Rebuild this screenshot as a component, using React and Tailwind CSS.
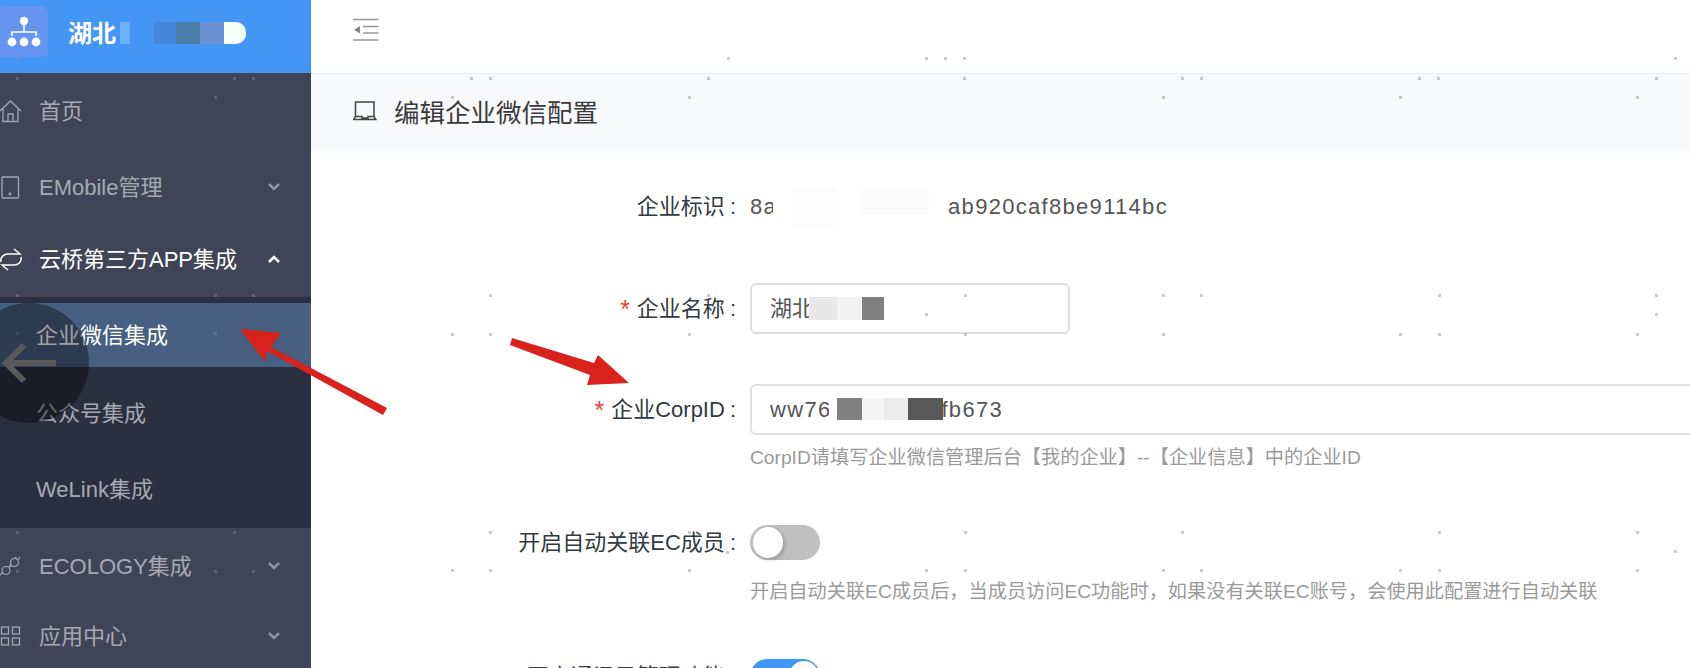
import React from "react";

const dots = [
  [17,58],[17,78],[234,78],[253,78],[215,97],[17,295],[215,295],[253,295],[17,333],[215,333],[17,532],[234,532],[215,571],[253,571],[17,571],
  [471,78],[490,78],[452,97],[689,97],[708,78],[728,58],[926,58],[945,58],[964,58],[964,78],[1182,78],[1163,97],
  [1675,58],[1201,78],[1419,78],[1438,78],[1656,78],[1400,97],[1637,97],
  [490,295],[708,295],[965,295],[926,314],[452,334],[490,334],[689,334],[965,334],
  [490,532],[689,532],[965,532],[452,570],[490,570],[689,570],[926,570],[965,570],[727,552],
  [1163,295],[1201,295],[1439,295],[1656,295],[1656,314],[1163,334],[1400,334],[1439,334],[1637,334],
  [1182,532],[1439,532],[1637,532],[1675,551],[1163,570],[1201,570],[1400,570],[1439,570],[1637,570],
];

const Chevron = ({ up }) => (
  <svg width="14" height="10" viewBox="0 0 14 10" fill="none" stroke="#8f939e" strokeWidth="2.6">
    {up ? <path d="M2 8 L7 3 L12 8" stroke="#ffffff" /> : <path d="M2 2 L7 7 L12 2" />}
  </svg>
);

const HomeIcon = () => (
  <svg width="22" height="23" viewBox="0 0 22 23" fill="none" stroke="#a4a7b1" strokeWidth="1.3">
    <path d="M0 11 L10.5 1 L21 11 M3 9 V21.5 H18 V9 M8 21.5 V14 H13 V21.5" />
  </svg>
);
const TabletIcon = () => (
  <svg width="22" height="23" viewBox="0 0 22 23" fill="none" stroke="#a4a7b1" strokeWidth="1.3">
    <rect x="2" y="1" width="16.5" height="21" rx="1" />
    <circle cx="10" cy="18" r="0.8" fill="#a4a7b1" />
  </svg>
);
const SyncIcon = () => (
  <svg width="22" height="23" viewBox="0 0 22 23" fill="none" stroke="#ffffff" strokeWidth="1.5">
    <path d="M1 14 C0 9 4 6 8 6 H20 L14 1" />
    <path d="M21 9 C22 14 18 17 14 17 H2 L8 22" />
  </svg>
);
const PlugIcon = () => (
  <svg width="21" height="21" viewBox="0 0 21 21" fill="none" stroke="#a4a7b1" strokeWidth="1.2">
    <path d="M0 19 L3 16 M18 4 L20 1 M15 1 L17 3" />
    <circle cx="6" cy="14.5" r="4" />
    <circle cx="14.5" cy="6.5" r="4" />
    <path d="M9 11 L11.5 9" strokeWidth="2" />
  </svg>
);
const AppsIcon = () => (
  <svg width="21" height="20" viewBox="0 0 21 20" fill="none" stroke="#a4a7b1" strokeWidth="1.3">
    <rect x="1.5" y="1" width="7" height="7" />
    <rect x="12.5" y="1" width="7" height="7" />
    <rect x="1.5" y="12" width="7" height="7" />
    <rect x="12.5" y="12" width="7" height="7" />
  </svg>
);

const NavItem = ({ icon, label, chevron, up, h, active, pb }) => (
  <div className={`relative flex items-center shrink-0 ${h} ${pb || ""}`}>
    <div className="w-[39px] shrink-0 flex items-center">{icon}</div>
    <span className={`text-[22px] leading-[28px] mt-[2px] ${active ? "text-white" : "text-[#a6a9b3]"}`}>{label}</span>
    {chevron && <span className="ml-auto mr-[30px] flex"><Chevron up={up} /></span>}
  </div>
);

const Label = ({ required, children }) => (
  <div className="w-[428px] shrink-0 flex justify-end items-center text-[22px] leading-[30px] text-[#333a40] pr-[3px]">
    {required && <span className="text-[#ee3f3f] text-[25px] mr-[7px]">*</span>}
    <span>{children}</span>
    <span className="ml-[5px]">:</span>
  </div>
);

const Switch = ({ on }) => (
  <div className={`relative w-[70px] h-[35px] rounded-full ml-[11px] ${on ? "bg-[#4096f5]" : "bg-[#bfbfbf]"}`}>
    <div className={`absolute top-[2px] w-[30px] h-[31px] rounded-full bg-white shadow-[2px_2px_4px_rgba(0,0,0,0.2)] ${on ? "left-[39px]" : "left-[3px]"}`} />
  </div>
);

export default function App() {
  return (
    <div
      className="relative flex w-full h-[668px] overflow-hidden bg-white"
      style={{ fontFamily: '"Liberation Sans","Noto Sans CJK SC",sans-serif' }}
    >
      {/* sidebar */}
      <aside className="w-[311px] shrink-0 h-full flex flex-col bg-[#3f4557]">
        <div className="h-[73px] shrink-0 bg-[#4496f5] flex items-center">
          <div className="ml-[-4px] w-[52px] h-[51px] mb-[10px] rounded-[6px] bg-[#6595ee] flex items-center justify-center shrink-0">
            <svg width="34" height="32" viewBox="0 0 34 32" fill="#fff" stroke="none" className="ml-[4px]">
              <circle cx="17" cy="5" r="4.2" />
              <circle cx="5" cy="26" r="4.4" />
              <circle cx="17" cy="26" r="4.4" />
              <circle cx="29" cy="26" r="4.4" />
              <path d="M16.2 9 h1.6 v6.2 H29.8 V20 h-1.6 v-3.2 H5.8 V20 H4.2 v-4.8 H16.2 z" />
            </svg>
          </div>
          <span className="ml-[20px] text-[24px] leading-[30px] font-bold text-white mb-[6px]">湖北</span>
          <div className="flex h-[22px] ml-[4px] mb-[8px]">
            <div className="w-[10px] bg-[#6bb2ff]" />
            <div className="w-[24px]" />
            <div className="w-[22px] bg-[#4287d9]" />
            <div className="w-[24px] bg-[#4a7ca8]" />
            <div className="w-[24px] bg-[#6c90d4]" />
            <div className="w-[22px] bg-[#f8fff8] rounded-r-[10px]" />
          </div>
        </div>

        <NavItem icon={<HomeIcon />} label="首页" h="h-[76px]" />
        <NavItem icon={<TabletIcon />} label="EMobile管理" chevron h="h-[76px]" />
        <NavItem icon={<SyncIcon />} label="云桥第三方APP集成" chevron up h="h-[72px]" pb="pb-[4px]" active />

        <div className="h-[231px] shrink-0 bg-[#2b3040] pt-[6px] flex flex-col">
          <div className="h-[64px] shrink-0 bg-[#475f80] flex items-center pl-[36px] text-[22px] text-white">企业微信集成</div>
          <div className="h-[84px] shrink-0 pt-[8px] flex items-center pl-[36px] text-[22px] text-[#a6a9b3]">公众号集成</div>
          <div className="h-[76px] shrink-0 flex items-center pl-[36px] text-[22px] text-[#a6a9b3]">WeLink集成</div>
        </div>

        <NavItem icon={<PlugIcon />} label="ECOLOGY集成" chevron h="h-[76px]" />
        <NavItem icon={<AppsIcon />} label="应用中心" chevron h="h-[64px]" />
      </aside>

      {/* main */}
      <main className="flex-1 min-w-0 flex flex-col">
        <div className="h-[74px] shrink-0 border-b border-[#e9ebee] flex items-start pl-[42px] pt-[18px]">
          <svg width="26" height="23" viewBox="0 0 26 23" fill="none" stroke="#999" strokeWidth="1.6">
            <path d="M0 1.5 H25.5 M10 8.5 H25.5 M10 15 H25.5 M0 22 H25.5" />
            <path d="M7 8 V15.5 L1 11.8 z" fill="#888" stroke="none" />
          </svg>
        </div>
        <div className="h-[77px] shrink-0 bg-[#f8f9fb] flex items-center pl-[42px]">
          <svg width="24" height="20" viewBox="0 0 24 20" fill="none" stroke="#444" strokeWidth="1.5" className="mb-[3px]">
            <path d="M2.5 15.5 V1 H21 V15.5" />
            <path d="M0.5 18.5 L2.5 15.5 H9 V17 H15 V15.5 H21 L23 18.5 z" />
          </svg>
          <span className="ml-[17px] text-[25.5px] leading-[32px] text-[#3a3a3a]">编辑企业微信配置</span>
        </div>

        <div className="flex flex-col">
          <div className="flex items-center mt-[41px] h-[30px]">
            <Label>企业标识</Label>
            <div className="ml-[11px] flex items-center text-[22px] leading-[30px] tracking-[1.3px] text-[#555]">
              <span className="whitespace-nowrap">8a</span>
              <span className="relative ml-[-4px] w-[175px] h-[40px] flex bg-white">
                <span className="ml-[17px] w-[47px] h-[40px] bg-[#fdfdfd]" />
                <span className="ml-[22px] w-[70px] h-[28px] bg-[#fcfcfc]" />
              </span>
              <span>ab920caf8be9114bc</span>
            </div>
          </div>

          <div className="flex items-center mt-[61px]">
            <Label required>企业名称</Label>
            <div className="ml-[11px] w-[320px] h-[51px] rounded-[6px] border-2 border-[#dfdfdf] flex items-center pl-[18px] text-[22px] text-[#555]">
              <span className="whitespace-nowrap">湖北</span>
              <div className="relative flex h-[23px] ml-[-5px]">
                <div className="w-[28px] bg-[#e8e8e8]" />
                <div className="w-[25px] bg-[#f3f3f3]" />
                <div className="w-[22px] bg-[#808080]" />
              </div>
            </div>
          </div>

          <div className="flex items-center mt-[50px]">
            <Label required>企业CorpID</Label>
            <div className="ml-[11px] flex-1 mr-[-10px] h-[51px] rounded-[6px] border-2 border-[#dfdfdf] flex items-center pl-[18px] text-[22px] tracking-[1.3px] text-[#555]">
              <span className="whitespace-nowrap">ww76</span>
              <div className="relative flex h-[22px] ml-[-2px] mb-[2px]">
                <div className="w-[8px] bg-white" />
                <div className="w-[25px] bg-[#808080]" />
                <div className="w-[22px] bg-[#f5f5f5]" />
                <div className="w-[24px] bg-[#ececec]" />
                <div className="w-[35px] bg-[#595959]" />
              </div>
              <span className="ml-[-2px]">fb673</span>
            </div>
          </div>

          <div className="mt-[9px] ml-[439px] text-[19.2px] leading-[28px] text-[#9a9a9a] whitespace-nowrap">
            CorpID请填写企业微信管理后台【我的企业】--【企业信息】中的企业ID
          </div>

          <div className="flex items-center mt-[53px]">
            <Label>开启自动关联EC成员</Label>
            <Switch />
          </div>
          <div className="mt-[18px] ml-[439px] text-[19.2px] leading-[28px] text-[#9a9a9a] whitespace-nowrap">
            开启自动关联EC成员后，当成员访问EC功能时，如果没有关联EC账号，会使用此配置进行自动关联
          </div>

          <div className="flex items-center mt-[53px]">
            <Label>开启通讯录管理功能</Label>
            <Switch on />
          </div>
        </div>
      </main>

      {/* scattered dots */}
      {dots.map(([x, y], i) => (
        <div
          key={i}
          className="absolute w-[3px] h-[3px] bg-[rgba(140,140,150,0.45)] pointer-events-none"
          style={{ left: x - 1, top: y - 1 }}
        />
      ))}

      {/* back gesture circle */}
      <div className="absolute left-[-31px] top-[303px] w-[120px] h-[120px] rounded-full bg-[rgba(0,0,0,0.38)] flex items-center justify-end pr-[32px] pointer-events-none">
        <svg width="56" height="42" viewBox="0 0 56 42" fill="none" stroke="#5a5a5a" strokeWidth="6">
          <path d="M55 21 H5 M23 3 L5 21 L23 39" />
        </svg>
      </div>

      {/* red annotation arrows */}
      <svg width="1690" height="668" viewBox="0 0 1690 668" className="absolute left-0 top-0 pointer-events-none">
        <polygon fill="#d9221c" points="240,329 281,333 271,347 387,408 383,415 267,351 265,362" />
        <polygon fill="#d9221c" points="512,338 594,363 598,355 629,383 587,385 590,375 510,345" />
      </svg>
    </div>
  );
}
